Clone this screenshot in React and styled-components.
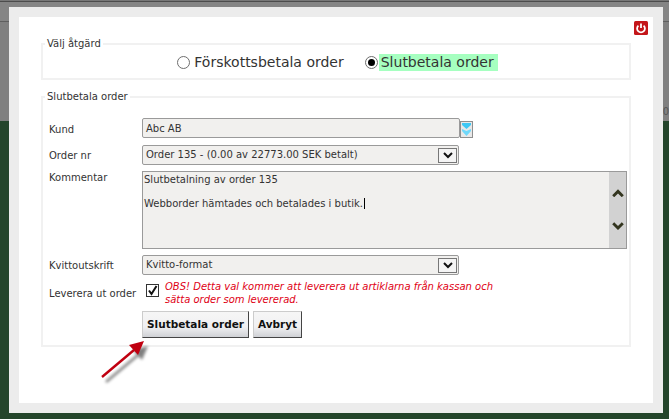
import styled, { createGlobalStyle } from 'styled-components'

const Global = createGlobalStyle`
html, body { margin: 0; padding: 0; }
body { font-family: "DejaVu Sans", Verdana, sans-serif; font-size: 10px; color: #333; }
* { box-sizing: border-box; }
`

const Page = styled.div`
position: relative;
width: 669px;
height: 419px;
overflow: hidden;
display: flex;
flex-direction: column;
background: #24452b;
`
const TopBar = styled.div`
height: 22px;
background: #858585;
border-top: 1px solid #777;
border-bottom: 1px solid #5f5f5f;
box-shadow: inset 0 1px 0 #4c4c4c;
`
const GrayBand = styled.div`
height: 99px;
background: #808080;
display: flex;
justify-content: flex-end;
align-items: flex-end;
padding-bottom: 3px;
`
const BehindText = styled.span`
font-size: 10px;
line-height: 13px;
color: #555;
`
const Modal = styled.div`
position: absolute;
left: 9px;
top: 7px;
width: 654px;
height: 406px;
background: #fff;
border: 10px solid #ececec;
padding: 20px 22px 0 22px;
`
const CloseButton = styled.div`
position: absolute;
right: 5px;
top: 4px;
width: 14px;
height: 14px;
`
const Fieldset = styled.fieldset`
margin: 0 0 10px 0;
padding: 0;
border: 2px solid #f1f1f1;
min-width: 0;
`
const Legend = styled.legend`
margin-left: 2px;
padding: 0 2px;
font-size: 10px;
line-height: 13px;
color: #333;
`
const ChoiceRow = styled.div`
height: 28px;
display: flex;
justify-content: center;
align-items: center;
font-size: 14px;
padding: 0 0 4px 3px;
`
const Choice = styled.div`
display: flex;
align-items: center;
margin-right: ${p => p.$gap || 0}px;
`
const Radio = styled.span`
width: 13px;
height: 13px;
border-radius: 50%;
border: 1px solid #6e6e6e;
background: #fff;
margin-right: ${p => (p.$checked ? 1 : 4)}px;
display: flex;
align-items: center;
justify-content: center;
&::after {
  content: "";
  display: ${p => (p.$checked ? 'block' : 'none')};
  width: 7px;
  height: 7px;
  border-radius: 50%;
  background: #000;
}
`
const ChoiceText = styled.span`
line-height: 17px;
padding: 0 ${p => (p.$on ? '4px' : '0')} 0 ${p => (p.$on ? '2px' : '0')};
background: ${p => (p.$on ? '#a6ffc0' : 'transparent')};
`
const FormBody = styled.div`
padding: 15px 2px 7px 6px;
`
const Row = styled.div`
display: flex;
align-items: ${p => p.$align || 'center'};
margin-bottom: ${p => p.$mb ?? 6}px;
`
const Label = styled.div`
width: 93px;
flex: none;
font-size: 10px;
line-height: 13px;
margin-top: ${p => p.$mt || 0}px;
`
const InputBox = styled.div`
width: ${p => p.$w}px;
height: 20px;
flex: none;
border: 1px solid #9a9a9a;
border-radius: 2px;
background: #f1f0ee;
font-size: 10px;
line-height: 20px;
padding-left: 3px;
`
const SelectBox = styled(InputBox)`
display: flex;
align-items: center;
justify-content: space-between;
padding-right: 1px;
`
const SelectArrow = styled.span`
width: 19px;
height: 15px;
border: 1px solid #777;
background: #f4f4f4;
display: flex;
align-items: center;
justify-content: center;
`
const SpinButton = styled.div`
width: 13px;
height: 17px;
flex: none;
margin-top: 3px;
`
const TextArea = styled.div`
width: 485px;
height: 78px;
flex: none;
border: 1px solid #9a9a9a;
background: #f1f0ee;
display: flex;
justify-content: space-between;
`
const AreaText = styled.div`
font-size: 10px;
line-height: 12px;
padding: 2px 0 0 1px;
white-space: pre-line;
`
const Caret = styled.span`
border-left: 1px solid #000;
margin-left: 1px;
`
const ScrollBar = styled.div`
width: 17px;
background: #d2d2d2;
display: flex;
flex-direction: column;
justify-content: space-between;
align-items: center;
padding: 17px 0 18px;
`
const Check = styled.span`
width: 13px;
height: 13px;
flex: none;
margin: 4px 6px 0 4px;
border: 1px solid #333;
background: #fff;
display: flex;
align-items: center;
justify-content: center;
`
const Warning = styled.div`
font-size: 10px;
line-height: 13px;
font-style: italic;
color: #e00014;
width: 340px;
`
const Buttons = styled.div`
display: flex;
gap: 4px;
padding-left: 93px;
margin-top: 5px;
`
const Button = styled.div`
height: 27px;
padding: 0 4px;
font-size: 10.5px;
font-weight: bold;
line-height: 25px;
color: #111;
border: 1px solid;
border-color: #ccc #444 #444 #ccc;
background: linear-gradient(#f6f6f6, #f0f0f2 60%, #cfd1d5);
`
const ArrowMark = styled.svg`
position: absolute;
left: 90px;
top: 330px;
overflow: visible;
`

const Chevron = ({ up, size = 10, w = 2, color = '#111' }) => (
  <svg width={size} height={size * 0.7} viewBox="0 0 10 7">
    <path d={up ? 'M1 6 L5 2 L9 6' : 'M1 1 L5 5 L9 1'} fill="none" stroke={color} strokeWidth={w} />
  </svg>
)

export default function App() {
  return (
    <Page>
      <Global />
      <TopBar />
      <GrayBand>
        <BehindText>0</BehindText>
      </GrayBand>
      <Modal>
        <CloseButton>
          <svg width="14" height="14" viewBox="0 0 14 14">
            <rect width="14" height="14" rx="1.5" fill="#c4161a" />
            <path d="M4.4 4.6 A3.9 3.9 0 1 0 9.6 4.6" fill="none" stroke="#fff" strokeWidth="1.8" />
            <path d="M7 2.6 V7" stroke="#fff" strokeWidth="1.8" />
          </svg>
        </CloseButton>
        <Fieldset>
          <Legend>Välj åtgärd</Legend>
          <ChoiceRow>
            <Choice $gap={21}>
              <Radio />
              <ChoiceText>Förskottsbetala order</ChoiceText>
            </Choice>
            <Choice>
              <Radio $checked />
              <ChoiceText $on>Slutbetala order</ChoiceText>
            </Choice>
          </ChoiceRow>
        </Fieldset>
        <Fieldset>
          <Legend>Slutbetala order</Legend>
          <FormBody>
            <Row $mb={7}>
              <Label $mt={2}>Kund</Label>
              <InputBox $w={318}>Abc AB</InputBox>
              <SpinButton>
                <svg width="13" height="17" viewBox="0 0 13 17">
                  <rect x="0.5" y="0.5" width="12" height="16" fill="#e8e8e8" stroke="#8f8f8f" />
                  <path d="M2 2 H11 V4 L6.5 8 L2 4 Z" fill="#3fc8f5" />
                  <path d="M2 8 L6.5 10 L11 8 V10 L6.5 15 L2 10 Z" fill="#6fd8fa" />
                </svg>
              </SpinButton>
            </Row>
            <Row $mb={6}>
              <Label>Order nr</Label>
              <SelectBox $w={317}>
                Order 135 - (0.00 av 22773.00 SEK betalt)
                <SelectArrow><Chevron /></SelectArrow>
              </SelectBox>
            </Row>
            <Row $align="flex-start" $mb={6}>
              <Label>Kommentar</Label>
              <TextArea>
                <AreaText>
                  {'Slutbetalning av order 135\n\nWebborder hämtades och betalades i butik.'}
                  <Caret />
                </AreaText>
                <ScrollBar>
                  <Chevron up size={12} w={2.4} color="#33351f" />
                  <Chevron size={12} w={2.4} color="#33351f" />
                </ScrollBar>
              </TextArea>
            </Row>
            <Row $mb={5}>
              <Label>Kvittoutskrift</Label>
              <SelectBox $w={317}>
                Kvitto-format
                <SelectArrow><Chevron /></SelectArrow>
              </SelectBox>
            </Row>
            <Row $align="flex-start" $mb={0}>
              <Label $mt={7}>Leverera ut order</Label>
              <Check>
                <svg width="11" height="11" viewBox="0 0 11 11">
                  <path d="M2 5.5 L4.5 9 L9.5 1" fill="none" stroke="#111" strokeWidth="2" />
                </svg>
              </Check>
              <Warning>OBS! Detta val kommer att leverera ut artiklarna från kassan och sätta order som levererad.</Warning>
            </Row>
            <Buttons>
              <Button>Slutbetala order</Button>
              <Button>Avbryt</Button>
            </Buttons>
          </FormBody>
        </Fieldset>
      </Modal>
      <ArrowMark width="70" height="60" viewBox="0 0 70 60">
        <defs>
          <filter id="sh" x="-30%" y="-30%" width="170%" height="170%">
            <feGaussianBlur stdDeviation="1.5" />
          </filter>
        </defs>
        <g transform="translate(4,5)" opacity="0.5" filter="url(#sh)">
          <path d="M12 47 L44 20" stroke="#000" strokeWidth="2.4" />
          <path d="M54 11 L39 15 L48 25 Z" fill="#000" />
        </g>
        <path d="M12 47 L44 20" stroke="#c00010" strokeWidth="2.4" />
        <path d="M54 11 L39 15 L48 25 Z" fill="#c00010" />
      </ArrowMark>
    </Page>
  )
}
